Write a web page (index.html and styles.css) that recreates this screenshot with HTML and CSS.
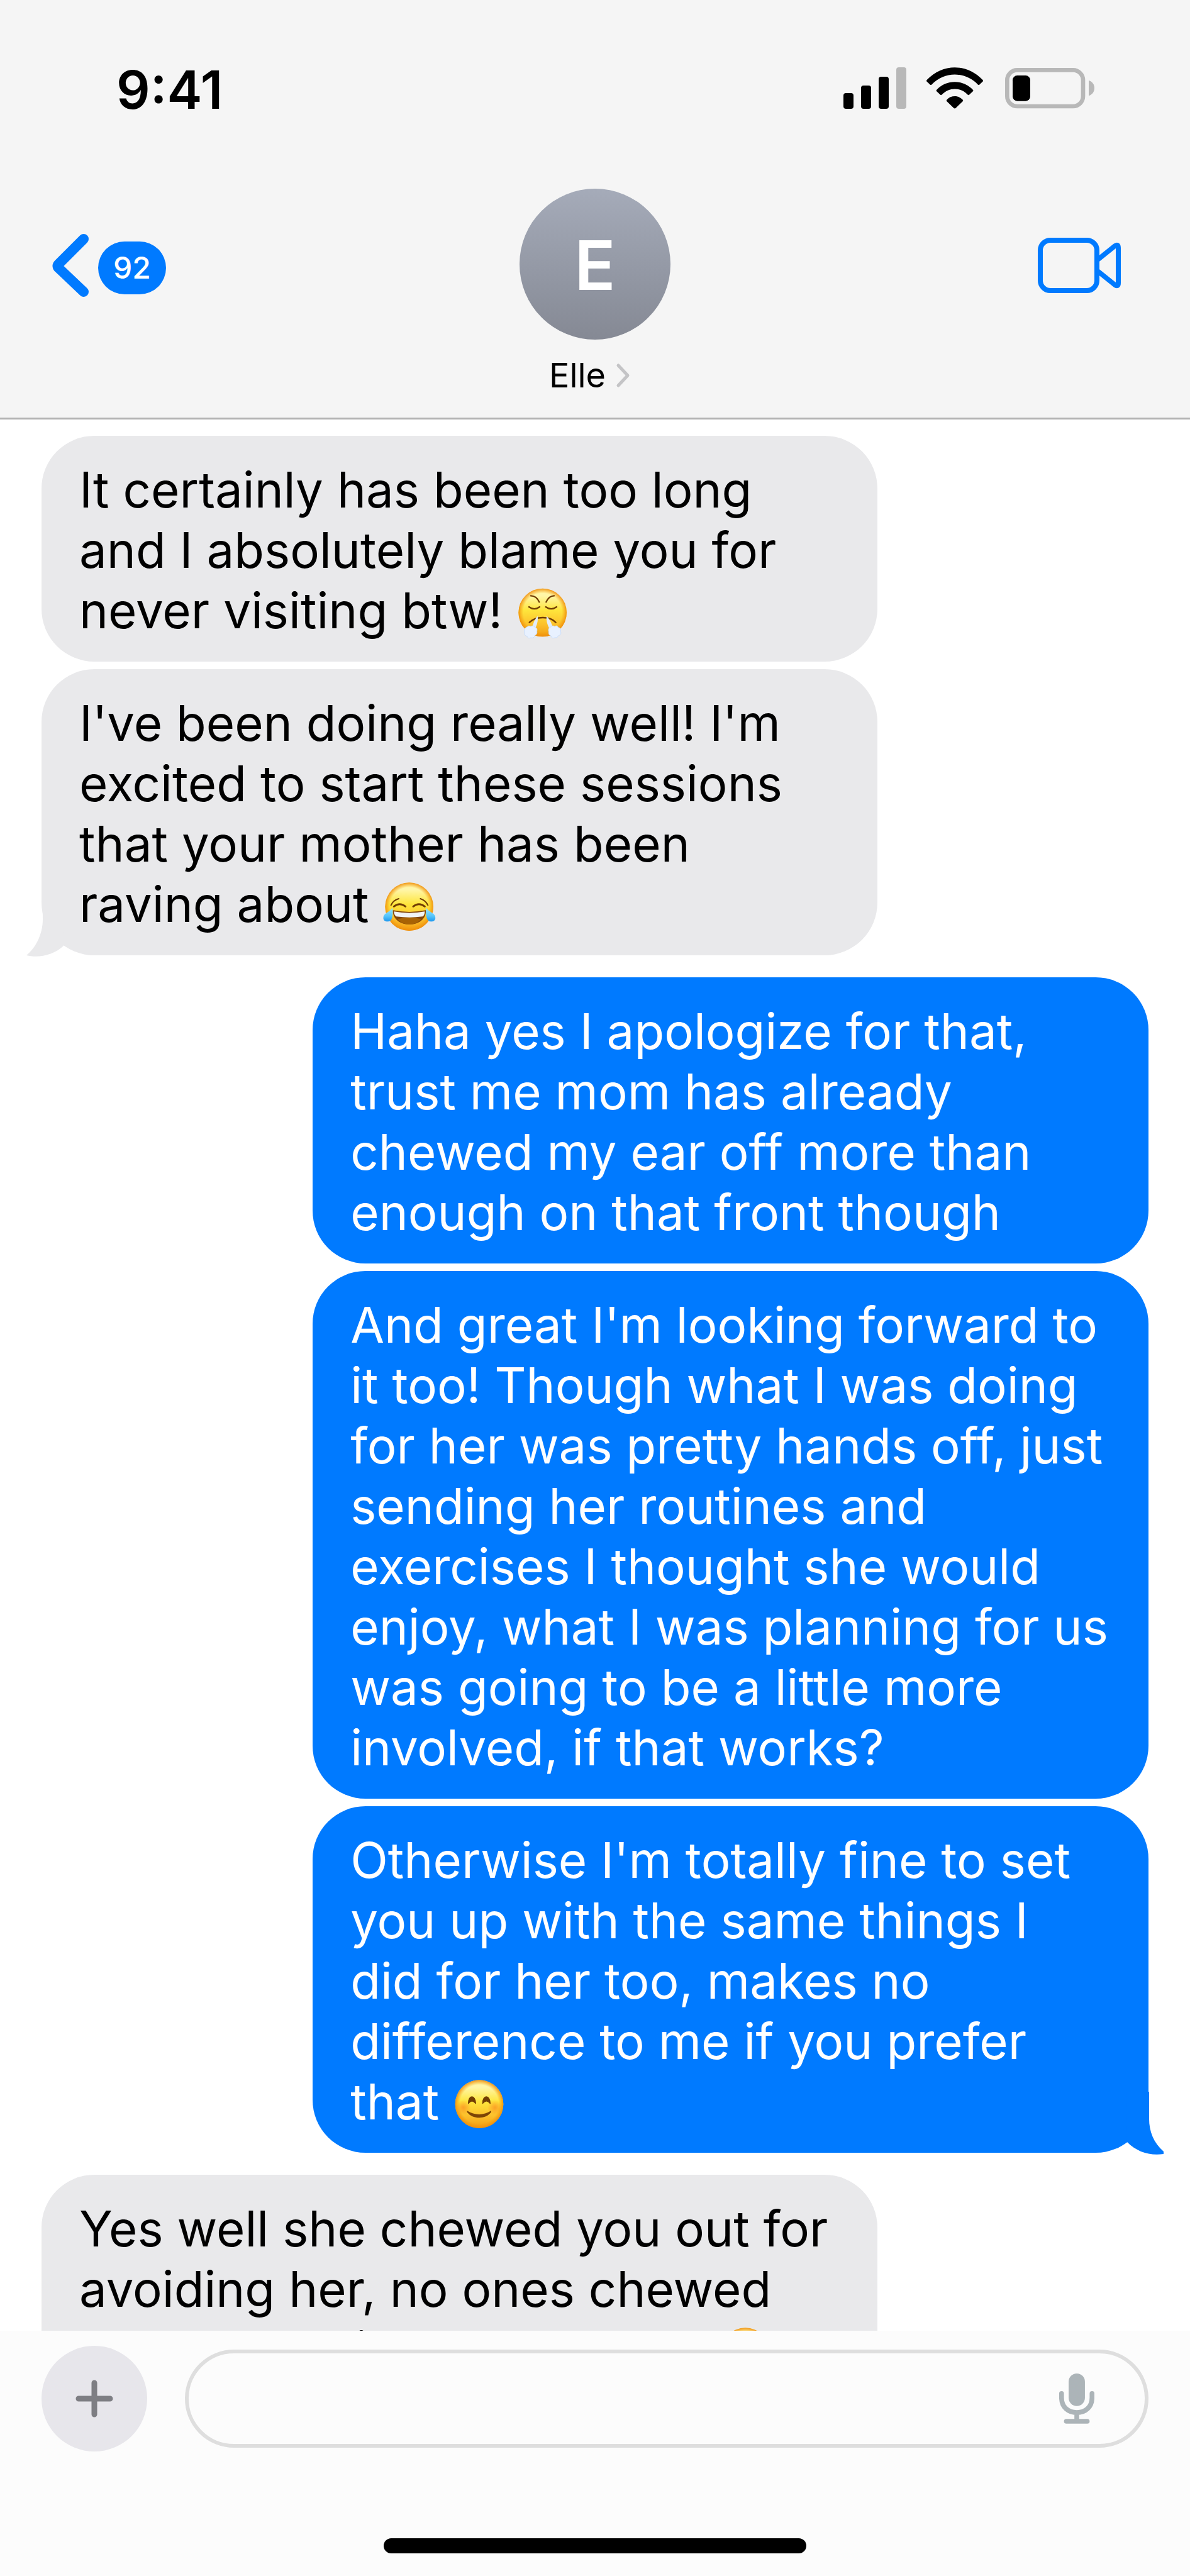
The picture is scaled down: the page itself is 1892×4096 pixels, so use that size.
FILE: index.html
```html
<!DOCTYPE html>
<html lang="en">
<head>
<meta charset="utf-8">
<meta name="viewport" content="width=device-width, initial-scale=1">
<title>Elle</title>
<link rel="stylesheet" href="styles.css">
</head>
<body>
<div class="phone">
  <header class="header">
    <div class="status">
      <time class="clock">9:41</time>
      <div class="status-icons">
        <svg class="signal" viewBox="0 0 100 66" aria-label="Signal">
          <rect x="0" y="41" width="16" height="25" rx="4"/>
          <rect x="28" y="29" width="16" height="37" rx="4"/>
          <rect x="56" y="15" width="16" height="51" rx="4"/>
          <rect x="84" y="0" width="16" height="66" rx="4" fill="#b8b8b8"/>
        </svg>
        <svg class="wifi" viewBox="468 54 272 198" aria-label="Wi-Fi">
          <path d="M470 114Q466 118 470 122L485 136Q489 140 493 136C555 72 653 72 715 136Q719 140 723 136L738 122Q742 118 738 114C663 34 545 34 470 114Z"/>
          <path d="M517 161Q513 165 517 169L534 185Q538 189 542 185C576 148 632 148 666 185Q670 189 674 185L691 169Q695 165 691 161C643 111 565 111 517 161Z"/>
          <path d="M566 209Q562 213 566 217L599 249Q604 253 609 249L642 217Q646 213 642 209C622 187 586 187 566 209Z"/>
        </svg>
        <svg class="battery" viewBox="846 54 426 195" aria-label="Battery">
          <rect x="856" y="64" width="362" height="173" rx="48" fill="none" stroke="#b8b8b8" stroke-width="20"/>
          <rect x="882" y="90" width="84" height="122" rx="22"/>
          <path d="M1245 113C1263 119 1272 134 1272 150S1263 181 1245 187Z" fill="#b8b8b8"/>
        </svg>
      </div>
    </div>
    <nav class="nav">
      <a class="back" href="#" aria-label="Back, 92 unread">
        <svg class="back-arrow" viewBox="0 0 60 102"><path d="M51 9 11 49q-3 3 0 6L51 93" fill="none" stroke="#007aff" stroke-width="16" stroke-linecap="round" stroke-linejoin="round"/></svg>
        <span class="badge">92</span>
      </a>
      <a class="contact" href="#">
        <span class="avatar">E</span>
        <span class="name">Elle
          <svg class="name-arrow" viewBox="0 0 24 40"><path d="M4 4 19 20 4 36" fill="none" stroke="#c4c4c6" stroke-width="5" stroke-linecap="round" stroke-linejoin="round"/></svg>
        </span>
      </a>
      <button class="video" type="button" aria-label="Video call">
        <svg viewBox="0 0 132 88"><g fill="none" stroke="#007aff" stroke-width="8"><rect x="4" y="4" width="90" height="80" rx="16"/><path d="M94 36 122 13.500Q128 9 128 16V72Q128 79 122 74.500L94 52" stroke-linejoin="round"/></g></svg>
      </button>
    </nav>
  </header>

  <main class="thread">
    <section class="group">
      <p class="bubble">It certainly has been too long and I absolutely blame you for never visiting btw! <svg class="emoji" viewBox="37 43 252 252" role="img" aria-label="Face with steam from nose"><use href="#face" x="6" y="8"/>
        <g fill="none" stroke="#713d04" stroke-width="7" stroke-linecap="round"><path d="M106 86Q133 86 146 116M217 86Q192 86 179 116"/><path d="M97 139Q123 158 148 139M177 139Q203 158 229 139"/><path d="M99 213Q122 190 163 190T225 213"/></g>
        <path d="M138 182Q143 205 129 238L112 238Q120 205 138 182ZM181 182Q178 210 192 238L211 238Q202 205 181 182Z" fill="#e3edfa"/>
        <g fill="#e8f1ff" stroke="#bdd5f7" stroke-width="2"><path d="M88 234Q96 226 106 232Q118 224 125 236Q140 240 135 255Q138 270 125 275Q122 290 106 286Q92 292 88 279Q72 275 76 262Q70 242 88 234ZM200 236Q208 224 220 232Q232 224 236 236Q252 240 248 256Q254 272 238 276Q232 290 220 286Q204 292 202 277Q188 272 191 258Q186 240 200 236Z"/></g>
      </svg></p>
      <p class="bubble">I've been doing really well! I'm excited to start these sessions that your mother has been raving about <svg class="emoji" viewBox="31 26 252 252" role="img" aria-label="Face with tears of joy"><use href="#face" x="0" y="-7"/>
        <g fill="none" stroke="#713d04" stroke-linecap="round"><path d="M69 144Q80 120 106 113M209 113Q234 121 245 144" stroke-width="6"/><path d="M83 150Q110 129 138 150M175 150Q202 129 230 150" stroke-width="9"/></g>
        <path d="M78 168Q157 184 235 168C238 208 204 236 157 236S76 208 78 168Z" fill="#83460a"/>
        <path d="M100 211Q157 190 213 211Q190 236 157 236T100 211Z" fill="#a86204"/>
        <path d="M83 174Q157 188 230 174Q230 192 220 198Q157 206 94 198Q83 190 83 174Z" fill="#f1f3f5"/>
        <path d="M76 157C79 181 79 222 54 222C26 222 27 193 46 182Q65 171 76 157ZM236 157C234 181 235 222 259 222C287 222 286 193 267 182Q248 171 236 157Z" fill="url(#tear)"/>
      </svg></p>
      <svg class="tail tail-in" viewBox="0 0 60 100"><path d="M24 10C26 22 26 32 26 40C26 62 16 84 0 97C20 102 44 96 59 82L60 0H30Z" fill="#e9e9eb"/></svg>
    </section>

    <section class="group sent">
      <p class="bubble">Haha yes I apologize for that, trust me mom has already chewed my ear off more than enough on that front though</p>
      <p class="bubble">And great I'm looking forward to it too! Though what I was doing for her was pretty hands off, just sending her routines and exercises I thought she would enjoy, what I was planning for us was going to be a little more involved, if that works?</p>
      <p class="bubble">Otherwise I'm totally fine to set you up with the same things I did for her too, makes no difference to me if you prefer that <svg class="emoji" viewBox="30 33 252 252" role="img" aria-label="Smiling face with smiling eyes"><use href="#face"/>
        <g fill="url(#blush)"><circle cx="80" cy="174" r="36"/><circle cx="231" cy="174" r="36"/></g>
        <path d="M104 155C104 112 137 112 139 155Q121 132 104 155ZM172 155C172 112 207 112 208 155Q190 132 172 155Z" fill="#713d04" stroke="#713d04" stroke-width="4" stroke-linejoin="round"/>
        <path d="M98 190Q155 224 212 190C214 194 212 198 208 202C184 230 126 230 103 202C98 197 96 194 98 190Z" fill="#7d4506"/>
      </svg></p>
      <svg class="tail tail-out" viewBox="0 0 60 100"><path d="M37 0V43C37 63 44 81 60 95V99C38 102 18 96 2 80L0 0Z" fill="#007aff"/></svg>
    </section>

    <section class="group">
      <p class="bubble">Yes well she chewed you out for avoiding her, no ones chewed me out that is, that has you <svg class="emoji" viewBox="30 33 252 252" role="img" aria-label="Grinning face"><use href="#face"/></svg></p>
    </section>
  </main>

  <footer class="footer">
    <form class="composer">
      <button class="add" type="button" aria-label="Add attachment">
        <svg viewBox="0 0 60 60"><path d="M30 5V55M5 30H55" stroke="#7e7e83" stroke-width="9" stroke-linecap="round"/></svg>
      </button>
      <div class="field">
        <input class="message" type="text" aria-label="Message">
        <button class="mic" type="button" aria-label="Dictate">
          <svg viewBox="564 395 168 241"><rect x="609" y="395" width="78" height="156" rx="39" fill="#acb4b8"/><path d="M575 491V510C575 556 607 582 648 582S721 556 721 510V491M648 582V624M598 624H698" fill="none" stroke="#acb4b8" stroke-width="23" stroke-linecap="round"/></svg>
        </button>
      </div>
    </form>
    <div class="home-bar"></div>
  </footer>
</div>

<svg class="defs" aria-hidden="true">
  <defs>
    <linearGradient id="skin" x1="0" y1="0" x2="0" y2="1"><stop offset="0" stop-color="#fff6a0"/><stop offset=".15" stop-color="#fff6a8"/><stop offset=".45" stop-color="#fee53c"/><stop offset=".75" stop-color="#fcc02b"/><stop offset="1" stop-color="#f19c12"/></linearGradient>
    <radialGradient id="rim"><stop offset=".8" stop-color="#f59a0c" stop-opacity="0"/><stop offset="1" stop-color="#ee8c0c" stop-opacity=".9"/></radialGradient>
    <radialGradient id="blush"><stop offset="0" stop-color="#fb7e1c" stop-opacity=".6"/><stop offset="1" stop-color="#fb7e1c" stop-opacity="0"/></radialGradient>
    <linearGradient id="tear" x1="0" y1="0" x2="0" y2="1"><stop offset="0" stop-color="#9be6ff"/><stop offset=".6" stop-color="#56c5fb"/><stop offset="1" stop-color="#1c97ee"/></linearGradient>
    <g id="face"><circle cx="156" cy="158" r="115" fill="url(#skin)"/><circle cx="156" cy="158" r="115" fill="url(#rim)"/></g>
  </defs>
</svg>
</body>
</html>
```

FILE: styles.css
```css
* { box-sizing: border-box; }

body {
  margin: 0;
  background: #fff;
  color: #000;
  font-family: Inter, "Liberation Sans", sans-serif;
}

svg { display: block; flex: none; }
a { color: inherit; text-decoration: none; }
button { padding: 0; border: 0; background: none; cursor: pointer; }

.defs { position: absolute; width: 0; height: 0; }

.phone {
  display: flex;
  flex-direction: column;
  height: 100vh;
}

/* Header */
.header {
  flex: none;
  padding-bottom: 34px;
  border-bottom: 3px solid #b2b2b2;
  background: #f5f5f5;
}

.status {
  display: flex;
  align-items: center;
  justify-content: space-between;
  height: 300px;
  padding: 0 152px 20px 185px;
}

.clock {
  padding-top: 6px;
  font-size: 84px;
  font-weight: 600;
  line-height: 100px;
}

.status-icons { display: flex; align-items: center; }
.signal { width: 100px; height: 66px; }
.wifi { width: 90px; height: 66px; margin: 0 35px 0 32px; }
.battery { width: 142px; height: 65px; }

.nav {
  display: grid;
  grid-template-columns: 1fr auto 1fr;
  align-items: start;
  padding: 0 82px;
}

.back, .video {
  display: flex;
  align-items: center;
  height: 244px;
}

.back { gap: 14px; }
.back-arrow { width: 60px; height: 102px; }

.badge {
  margin-top: 8px;
  padding: 0 24px;
  border-radius: 42px;
  background: #007aff;
  color: #fff;
  font-size: 48px;
  font-weight: 500;
  line-height: 84px;
}

.contact {
  display: flex;
  flex-direction: column;
  align-items: center;
  gap: 24px;
}

.avatar {
  width: 240px;
  height: 240px;
  border-radius: 50%;
  background: linear-gradient(#a5abb9, #858994);
  color: #fff;
  font-size: 108px;
  font-weight: 600;
  line-height: 244px;
  text-align: center;
}

.name {
  display: flex;
  align-items: center;
  font-size: 54px;
  line-height: 66px;
}

.name-arrow { width: 24px; height: 40px; margin: 0 16px; }
.video { justify-self: end; margin-right: 28px; }
.video svg { width: 132px; height: 88px; }

/* Conversation */
.thread {
  flex: 1;
  min-height: 0;
  overflow: hidden;
  display: flex;
  flex-direction: column;
  gap: 35px;
  padding: 26px 66px 0;
}

.group {
  position: relative;
  flex: none;
  display: flex;
  flex-direction: column;
  align-items: flex-start;
  gap: 12px;
}

.sent { align-items: flex-end; }

.bubble {
  width: 75.5%;
  margin: 0;
  padding: 38px 60px 33px;
  border-radius: 84px;
  background: #e9e9eb;
  font-size: 78px;
  line-height: 96px;
}

.sent .bubble { background: #007aff; color: #fff; }

.emoji {
  display: inline-block;
  width: 84px;
  height: 84px;
  vertical-align: -18px;
}

.tail {
  position: absolute;
  bottom: -3px;
  width: 60px;
  height: 100px;
}

.tail-in { left: -24px; }
.tail-out { right: -24px; }

/* Composer */
.footer {
  flex: none;
  padding: 24px 66px 36px;
  background: #fcfcfc;
}

.composer { display: flex; align-items: center; gap: 60px; }

.add {
  display: flex;
  align-items: center;
  justify-content: center;
  width: 168px;
  height: 168px;
  border-radius: 50%;
  background: #e7e6eb;
}

.add svg { width: 60px; height: 60px; }

.field {
  flex: 1;
  display: flex;
  align-items: center;
  height: 156px;
  padding: 0 80px 0 54px;
  border: 6px solid #dedede;
  border-radius: 78px;
}

.message {
  flex: 1;
  min-width: 0;
  height: 100%;
  border: 0;
  outline: 0;
  background: none;
  font: inherit;
  font-size: 78px;
}

.mic svg { width: 56px; height: 80px; }

.home-bar {
  width: 672px;
  height: 24px;
  margin: 138px auto 0;
  border-radius: 12px;
  background: #000;
}
```
